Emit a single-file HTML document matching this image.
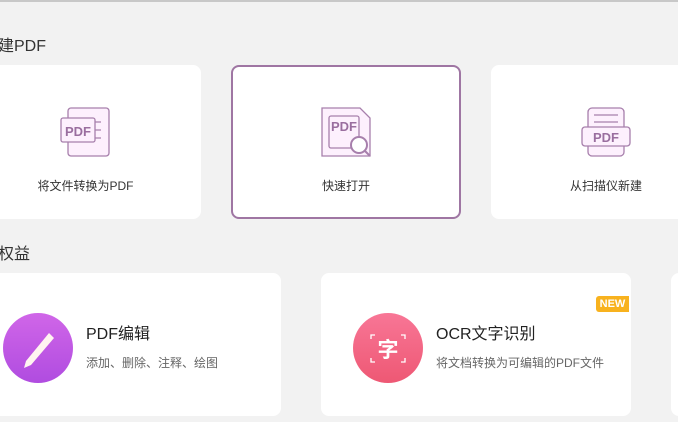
<!DOCTYPE html>
<html><head><meta charset="utf-8"><style>
body{margin:0;width:678px;height:422px;overflow:hidden;background:#f2f2f2;font-family:"Liberation Sans","Noto Sans CJK SC",sans-serif;position:relative}
.top{position:absolute;left:0;top:0;width:678px;height:2px;background:#c8c8c8}
.h{position:absolute;left:-2px;font-size:16px;color:#333}
.card{position:absolute;background:#fff;border-radius:8px;box-sizing:border-box}
.lbl{position:absolute;left:0;right:0;top:112px;text-align:center;font-size:12px;color:#333}
.ic{position:absolute;left:90px;top:42px;width:50px;height:50px}
.circ{position:absolute;left:32px;top:40px;width:70px;height:70px;border-radius:50%}
.t1{position:absolute;left:115px;top:47px;font-size:16px;color:#222}
.t2{position:absolute;left:115px;top:81px;font-size:12px;color:#666}
</style></head><body>
<div class="top"></div>
<div class="h" style="top:32px">建PDF</div>
<div class="card" style="left:-30px;top:65px;width:231px;height:154px">
<svg class="ic" viewBox="0 0 50 50"><rect x="8" y="1" width="41" height="48" rx="3" fill="#fdf0fd" stroke="#a77fac" stroke-width="1.3"/><rect x="1" y="11" width="34" height="24" rx="2" fill="#fdf0fd" stroke="#a77fac" stroke-width="1.3"/><text x="18" y="29" font-size="13" font-weight="bold" fill="#9a6e9f" text-anchor="middle" font-family="Liberation Sans">PDF</text><path d="M35 15h6M35 23h6M35 31h6" stroke="#a77fac" stroke-width="1.3"/></svg>
<div class="lbl">将文件转换为PDF</div></div>
<div class="card" style="left:231px;top:65px;width:230px;height:154px;border:2px solid #9f76a3">
<svg class="ic" style="left:88px;top:40px" viewBox="0 0 50 50"><path d="M1 1h38l10 10v38h-48z" fill="#fdf0fd" stroke="#a77fac" stroke-width="1.3"/><rect x="8" y="9" width="30" height="32" rx="2" fill="#fdf0fd" stroke="#a77fac" stroke-width="1.3"/><text x="23" y="24" font-size="13" font-weight="bold" fill="#9a6e9f" text-anchor="middle" font-family="Liberation Sans">PDF</text><circle cx="38" cy="38" r="8" fill="#fff" stroke="#a77fac" stroke-width="2"/><path d="M43 43l6 6" stroke="#a77fac" stroke-width="2"/></svg>
<div class="lbl" style="top:110px">快速打开</div></div>
<div class="card" style="left:491px;top:65px;width:230px;height:154px">
<svg class="ic" viewBox="0 0 50 50"><rect x="7" y="1" width="36" height="48" rx="4" fill="#fdf0fd" stroke="#a77fac" stroke-width="1.3"/><path d="M13 8h24M13 15h24" stroke="#a77fac" stroke-width="1.3"/><rect x="1" y="20" width="48" height="19" rx="3" fill="#fdf0fd" stroke="#a77fac" stroke-width="1.3"/><text x="25" y="35" font-size="13" font-weight="bold" fill="#9a6e9f" text-anchor="middle" font-family="Liberation Sans">PDF</text></svg>
<div class="lbl">从扫描仪新建</div></div>
<div class="h" style="top:240px">权益</div>
<div class="card" style="left:-29px;top:273px;width:310px;height:143px">
<div class="circ" style="background:linear-gradient(#d066e8,#b04ce0)"><svg width="70" height="70" viewBox="0 0 70 70"><path d="M46 20l5 5-23 27-7 3 2-7z" fill="#fff4f0"/></svg></div>
<div class="t1">PDF编辑</div><div class="t2">添加、删除、注释、绘图</div></div>
<div class="card" style="left:321px;top:273px;width:310px;height:143px">
<div class="circ" style="background:linear-gradient(#f87696,#ee5874)"><svg width="70" height="70" viewBox="0 0 70 70" fill="none" stroke="#fff" stroke-width="1.3"><path d="M18 26v-4h4M52 26v-4h-4M18 45v4h4M52 45v4h-4"/><text x="35" y="44" font-size="21" font-weight="bold" fill="#fff" stroke="none" text-anchor="middle" font-family="Noto Sans CJK SC">字</text></svg></div>
<div style="position:absolute;left:275px;top:23px;width:33px;height:16px;background:#f8b21e;border-radius:3px 0 0 3px;color:#fff;font-size:11px;font-weight:bold;text-align:center;line-height:16px">NEW</div>
<div class="t1">OCR文字识别</div><div class="t2">将文档转换为可编辑的PDF文件</div></div>
<div class="card" style="left:671px;top:273px;width:310px;height:143px"></div>
</body></html>
